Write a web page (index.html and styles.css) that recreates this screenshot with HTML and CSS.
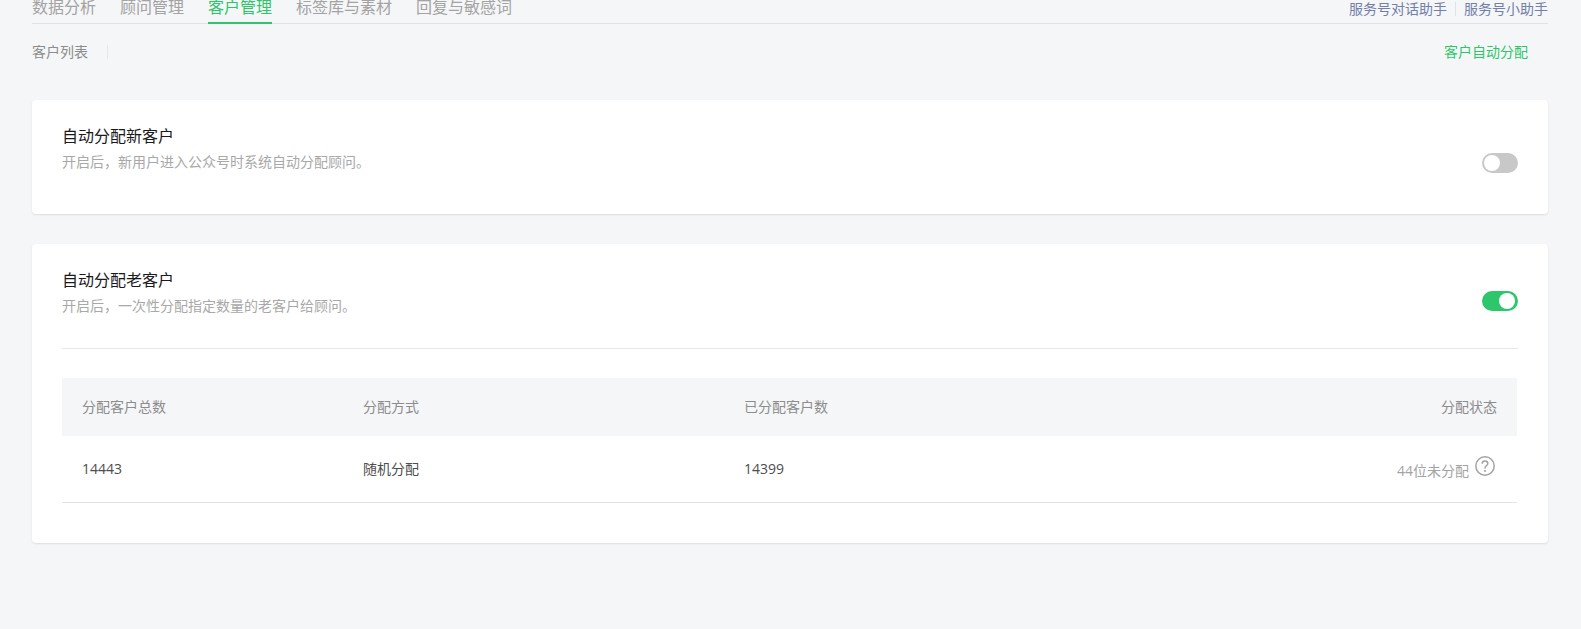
FILE: index.html
```html
<!DOCTYPE html>
<html lang="zh-CN">
<head>
<meta charset="utf-8">
<title>客户自动分配</title>
<link rel="stylesheet" href="styles.css">
</head>
<body>
<div class="page">
  <header class="topnav">
    <nav class="tabs">
      <a class="tab">数据分析</a>
      <a class="tab">顾问管理</a>
      <a class="tab tab-active">客户管理</a>
      <a class="tab">标签库与素材</a>
      <a class="tab">回复与敏感词</a>
    </nav>
    <div class="helpers">
      <a class="helper">服务号对话助手</a>
      <a class="helper helper-last">服务号小助手</a>
    </div>
  </header>
  <div class="subnav">
    <a class="sub-item">客户列表</a>
    <a class="sub-action">客户自动分配</a>
  </div>
  <section class="card card-new">
    <div class="head">
      <div>
        <h2 class="title">自动分配新客户</h2>
        <p class="desc">开启后，新用户进入公众号时系统自动分配顾问。</p>
      </div>
      <span class="switch switch-new"><span class="knob"></span></span>
    </div>
  </section>
  <section class="card card-old">
    <div class="head head-old">
      <div>
        <h2 class="title">自动分配老客户</h2>
        <p class="desc">开启后，一次性分配指定数量的老客户给顾问。</p>
      </div>
      <span class="switch switch-old switch-on"><span class="knob"></span></span>
    </div>
    <div class="table">
      <div class="row row-head">
        <span>分配客户总数</span>
        <span>分配方式</span>
        <span>已分配客户数</span>
        <span class="end">分配状态</span>
      </div>
      <div class="row row-body">
        <span>14443</span>
        <span>随机分配</span>
        <span>14399</span>
        <span class="end status">
          <span class="status-text">44位未分配</span>
          <svg class="help" width="20" height="20" viewBox="0 0 20 20" aria-hidden="true">
            <circle cx="10" cy="10" r="9.2" fill="none" stroke="#a3a3a3" stroke-width="1.5"/>
            <path d="M7.2 7.7c0-1.7 1.2-2.7 2.8-2.7s2.8 1 2.8 2.5c0 1.2-.7 1.8-1.5 2.4-.8.5-1.3 1-1.3 2v.5" fill="none" stroke="#a3a3a3" stroke-width="1.5"/>
            <circle cx="10" cy="15" r="1" fill="#a3a3a3"/>
          </svg>
        </span>
      </div>
    </div>
  </section>
</div>
</body>
</html>
```
FILE: styles.css
```css
* { box-sizing: border-box; }
html, body { margin: 0; padding: 0; height: 100%; overflow: hidden; }
body {
  background: #f5f6f8;
  font-family: "Open Sans", "Noto Sans CJK SC", sans-serif;
  color: #333;
}
.page { padding: 0 33px 0 32px; }
.topnav {
  display: flex;
  justify-content: space-between;
  height: 24px;
  border-bottom: 1px solid #e0e2e6;
}
.tabs { display: flex; gap: 24px; }
.tab {
  height: 24px;
  font-size: 16px;
  line-height: 14px;
  color: #a3a3a3;
}
.tab-active {
  color: #2dc66a;
  border-bottom: 2px solid #2dc66a;
}
.helpers { display: flex; align-items: center; height: 18px; }
.helper {
  font-size: 14px;
  line-height: 14px;
  color: #7480a8;
  padding-right: 8px;
  margin-right: 8px;
  border-right: 1px solid #e0e2e6;
}
.helper-last { padding-right: 0; margin-right: 0; border-right: 0; }
.subnav {
  display: flex;
  justify-content: space-between;
  align-items: center;
  height: 56px;
  padding: 0 20px 0 0;
}
.sub-item {
  font-size: 14px;
  line-height: 14px;
  color: #8c8c8c;
  padding-right: 19px;
  border-right: 1px solid #e6e7ea;
}
.sub-action { font-size: 14px; line-height: 14px; color: #2dc66a; }
.card {
  background: #fff;
  border-radius: 4px;
  box-shadow: 0 1px 2px rgba(0, 0, 0, .1);
  padding: 26px 30px 0;
}
.card-new { height: 114px; margin-top: 20px; }
.card-old { height: 299px; margin-top: 30px; }
.head { display: flex; justify-content: space-between; align-items: flex-start; }
.head-old { height: 79px; border-bottom: 1px solid #e6e7ea; }
.title {
  margin: 0;
  font-size: 16px;
  font-weight: 400;
  line-height: 20px;
  color: #1a1a1a;
}
.desc {
  margin: 6px 0 0;
  font-size: 14px;
  line-height: 20px;
  color: #a8a8a8;
}
.switch {
  position: relative;
  display: block;
  width: 36px;
  height: 20px;
  border-radius: 10px;
  background: #c8c8c8;
}
.switch-new { margin-top: 27px; }
.switch-old { margin-top: 21px; }
.switch-on { background: #2dc66a; }
.knob {
  position: absolute;
  top: 2px;
  left: 2px;
  width: 16px;
  height: 16px;
  border-radius: 50%;
  background: #fff;
}
.switch-on .knob { left: 17px; }
.table { margin: 29px 1px 0 0; font-size: 14px; }
.row {
  display: grid;
  grid-template-columns: 281px 381px 1fr auto;
  align-items: center;
  padding: 0 20px 2px;
}
.row-head { height: 58px; background: #f5f6f8; color: #8c8c8c; }
.row-body { height: 67px; border-bottom: 1px solid #e3e4e7; color: #4d4d4d; }
.status { display: flex; align-items: center; gap: 6px; color: #a3a3a3; padding-right: 2px; }
.status-text { margin-top: 3px; }
.help { margin-top: -5px; }
```
